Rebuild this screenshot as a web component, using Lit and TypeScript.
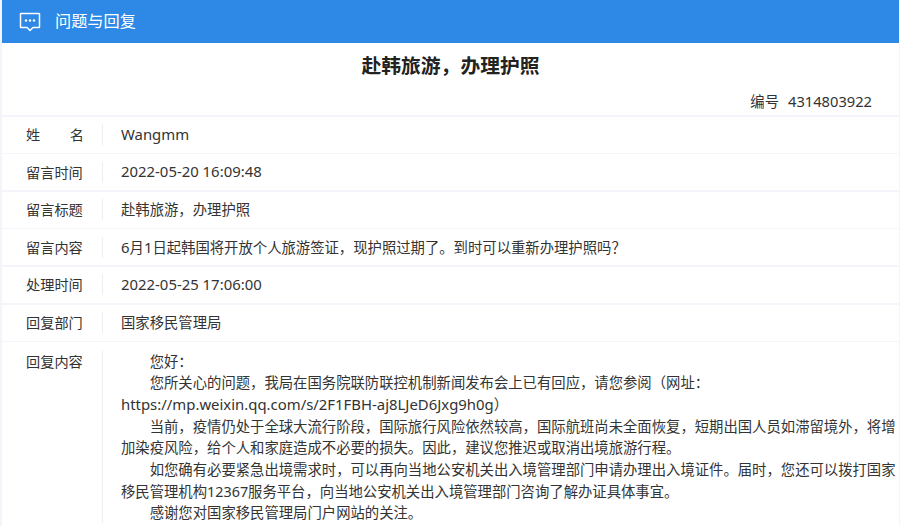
import { LitElement, html, css } from "lit";
import { customElement } from "lit/decorators.js";

const rows = [
  ["留言时间", html`<b>2022-05-20 16:09:48</b>`],
  ["留言标题", "赴韩旅游，办理护照"],
  ["留言内容", html`<b>6</b>月<b>1</b>日起韩国将开放个人旅游签证，现护照过期了。到时可以重新办理护照吗？`],
  ["处理时间", html`<b>2022-05-25 17:06:00</b>`],
  ["回复部门", "国家移民管理局"],
];

@customElement("app-root")
export class AppRoot extends LitElement {
  static styles = css`
    :host { display: block; width: 900px; height: 526px; overflow: hidden; background: #f3f5fb; color: #333;
      font: 14.35px/21.7px "Noto Sans", "Noto Sans CJK SC", sans-serif; }
    b { font-weight: 400; font-size: 14.9px; }
    .page { margin: 0 1px 0 2px; background: #f3f5fb; height: 526px; }
    .bar { height: 43px; background: #2d89e5; color: #fff; display: flex; align-items: center; padding-left: 17px; gap: 14px; font-size: 16.2px; }
    .bar svg { display: block; }
    .head { background: #fff; }
    h1 { margin: 0; height: 45px; font-size: 19.8px; line-height: 45px; text-align: center; font-weight: 700; color: #222; }
    .no { height: 27px; line-height: 27px; text-align: right; padding-right: 27px; }
    .no span { margin-right: 9px; }
    .no b { font-size: 14.7px; }
    .row { margin-top: 1.6px; background: #fff; height: 36px; display: flex; align-items: center; }
    .label { width: 101px; flex: none; box-sizing: border-box; padding-left: 24px; height: 21px; line-height: 21px; border-right: 1px solid #eee; font-size: 14.2px; }
    .spread { display: flex; justify-content: space-between; padding-right: 18px; }
    .spread i { font-style: normal; }
    .val { margin-left: 18px; }
    .reply { margin-top: 1.6px; background: #fff; display: flex; padding-top: 8.4px; height: 200px; }
    .reply .label { height: 172px; }
    .body { margin-left: 18px; flex: 1; padding-right: 1px; }
    .body p { margin: 0; text-indent: 28.7px; }
  `;
  render() {
    return html`<div class="page">
      <div class="bar">
        <svg width="22" height="20" viewBox="0 0 22 20" fill="none" stroke="#fff" stroke-width="1.5">
          <path d="M2 1.5h18a.5.5 0 0 1 .5.5v13a.5.5 0 0 1-.5.5h-6l-3 3-3-3H2a.5.5 0 0 1-.5-.5V2a.5.5 0 0 1 .5-.5z"/>
          <g fill="#fff" stroke="none"><circle cx="7" cy="8.5" r="1.2"/><circle cx="11" cy="8.5" r="1.2"/><circle cx="15" cy="8.5" r="1.2"/></g>
        </svg>
        <div>问题与回复</div>
      </div>
      <div class="head">
        <h1>赴韩旅游，办理护照</h1>
        <div class="no"><span>编号</span><b>4314803922</b></div>
      </div>
      <div class="row"><div class="label spread"><i>姓</i><i>名</i></div><div class="val"><b>Wangmm</b></div></div>
      ${rows.map(([l, v]) => html`<div class="row"><div class="label">${l}</div><div class="val">${v}</div></div>`)}
      <div class="reply">
        <div class="label">回复内容</div>
        <div class="body">
          <p>您好：</p>
          <p>您所关心的问题，我局在国务院联防联控机制新闻发布会上已有回应，请您参阅（网址：<b>https://mp.weixin.qq.com/s/2F1FBH-aj8LJeD6Jxg9h0g</b>）</p>
          <p>当前，疫情仍处于全球大流行阶段，国际旅行风险依然较高，国际航班尚未全面恢复，短期出国人员如滞留境外，将增加染疫风险，给个人和家庭造成不必要的损失。因此，建议您推迟或取消出境旅游行程。</p>
          <p>如您确有必要紧急出境需求时，可以再向当地公安机关出入境管理部门申请办理出入境证件。届时，您还可以拨打国家移民管理机构12367服务平台，向当地公安机关出入境管理部门咨询了解办证具体事宜。</p>
          <p>感谢您对国家移民管理局门户网站的关注。</p>
        </div>
      </div>
    </div>`;
  }
}
